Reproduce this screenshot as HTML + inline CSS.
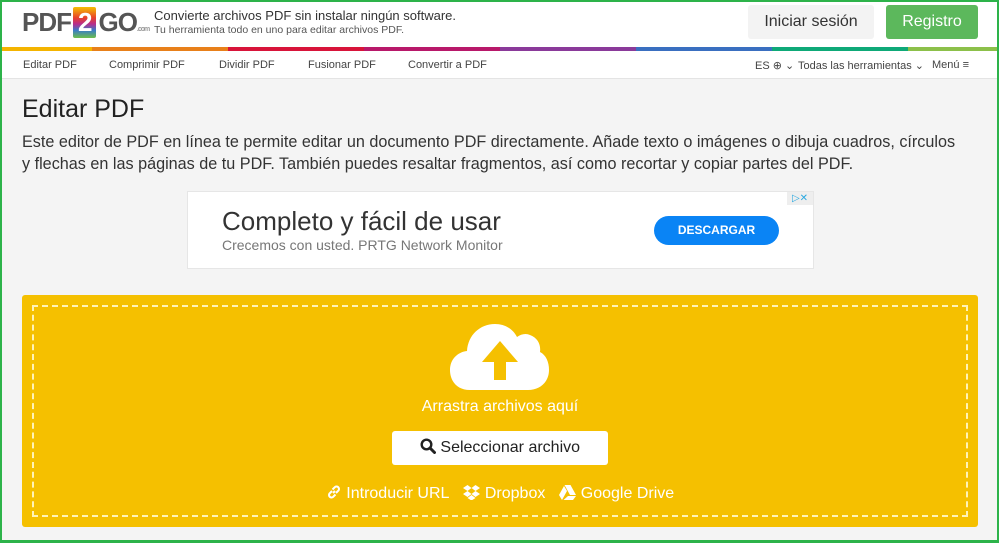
<!DOCTYPE html>
<html><head><meta charset="utf-8"><style>
*{margin:0;padding:0;box-sizing:border-box}
body{width:999px;height:543px;overflow:hidden;background:#f4f4f4;font-family:"Liberation Sans","DejaVu Sans",sans-serif;position:relative}
.frame{position:absolute;inset:0;border:2px solid #2db34a;border-bottom-width:3px;pointer-events:none;z-index:10}
.top{position:absolute;left:0;top:0;width:999px;height:47px;background:#fff}
.bar{position:absolute;top:47px;left:0;width:999px;height:4px;display:flex}
.bar div{height:4px}
.nav{position:absolute;top:51px;left:0;width:999px;height:28px;background:#fff;border-bottom:1px solid #e4e4e4;font-size:11px;color:#444}
.nav span{position:absolute;top:8px}
.logo{position:absolute;left:22px;top:7px;font-weight:bold;font-size:26px;color:#555;letter-spacing:-1px}
.tag1{position:absolute;left:154px;top:8px;font-size:13px;color:#333}
.tag2{position:absolute;left:154px;top:24px;font-size:10.5px;color:#555}
.btn1{position:absolute;left:748px;top:5px;width:126px;height:34px;background:#f3f3f3;border-radius:3px;font-size:16px;color:#333;text-align:center;line-height:34px}
.btn2{position:absolute;left:886px;top:5px;width:92px;height:34px;background:#5cb85c;border-radius:3px;font-size:16px;color:#fff;text-align:center;line-height:34px}
h1{position:absolute;left:22px;top:95px;font-size:25px;font-weight:normal;color:#222}
p.d{position:absolute;left:22px;top:131px;width:942px;font-size:16.2px;line-height:22px;color:#333}
.ad{position:absolute;left:187px;top:191px;width:627px;height:78px;background:#fff;border:1px solid #e6e6e6}
.ad .t{position:absolute;left:34px;top:14px;font-size:26px;color:#333}
.ad .s{position:absolute;left:34px;top:45px;font-size:14px;color:#777}
.ad .b{position:absolute;left:466px;top:24px;width:125px;height:29px;background:#0a84f5;border-radius:15px;color:#fff;font-size:12px;font-weight:bold;text-align:center;line-height:29px}
.up{position:absolute;left:22px;top:295px;width:956px;height:232px;background:#f5c000;border-radius:3px}
.dash{position:absolute;left:10px;top:10px;right:10px;bottom:10px;border:2px dashed #fff3b8}
.drag{position:absolute;left:0;width:100%;top:103px;text-align:center;color:#fff;font-size:16px}
.sel{position:absolute;left:370px;top:136px;width:216px;height:34px;background:#fff;border-radius:3px;text-align:center;line-height:34px;font-size:16px;color:#222}
.links{position:absolute;left:0;width:100%;top:189px;text-align:center;color:#fff;font-size:16px}
.links span{margin:0 7px}
svg.i{vertical-align:-2px}
</style></head><body>
<div class="top">
<div class="logo">PDF<span style="display:inline-block;background:linear-gradient(#f5c000,#e8412c 35%,#b72d8e 55%,#3a7bc8 75%,#6cbf4b);color:#fff;padding:0 5px;margin:0 2px;border-radius:2px">2</span>GO<span style="font-size:7px;color:#999">.com</span></div>
<div class="tag1">Convierte archivos PDF sin instalar ningún software.</div>
<div class="tag2">Tu herramienta todo en uno para editar archivos PDF.</div>
<div class="btn1">Iniciar sesión</div>
<div class="btn2">Registro</div>
</div>
<div class="bar">
<div style="width:92px;background:#f4b400"></div><div style="width:136px;background:#e8801a"></div><div style="width:136px;background:#d8143a"></div><div style="width:136px;background:#b8186a"></div><div style="width:136px;background:#8a3a9a"></div><div style="width:136px;background:#3a6fc0"></div><div style="width:136px;background:#0ea978"></div><div style="width:91px;background:#8cc04a"></div>
</div>
<div class="nav">
<span style="left:23px">Editar PDF</span><span style="left:109px">Comprimir PDF</span><span style="left:219px">Dividir PDF</span><span style="left:308px">Fusionar PDF</span><span style="left:408px">Convertir a PDF</span>
<span style="left:755px">ES ⊕ ⌄</span><span style="left:798px">Todas las herramientas ⌄</span><span style="left:932px">Menú ≡</span>
</div>
<h1>Editar PDF</h1>
<p class="d">Este editor de PDF en línea te permite editar un documento PDF directamente. Añade texto o imágenes o dibuja cuadros, círculos<br>y flechas en las páginas de tu PDF. También puedes resaltar fragmentos, así como recortar y copiar partes del PDF.</p>
<div class="ad"><div class="t">Completo y fácil de usar</div><div class="s">Crecemos con usted. PRTG Network Monitor</div><div class="b">DESCARGAR</div>
<div style="position:absolute;right:0;top:0;width:26px;height:13px;background:#eee;color:#29a8e0;font-size:10px;text-align:center;line-height:13px">▷✕</div></div>
<div class="up"><div class="dash"></div>
<svg style="position:absolute;left:428px;top:27px" width="100" height="70" viewBox="0 0 100 70"><path d="M20 68 C6 68 0 58 0 48 C0 37 8 30 17 29 C18 13 30 2 45 2 C55 2 63 7 67 15 C71 12 76 11 80 13 C88 16 91 23 90 30 C96 33 99 40 99 48 C99 60 90 68 78 68 Z" fill="#fff"/><path d="M44 58 V40 H32 L50 19 L68 40 H56 V58 Z" fill="#f5c000"/></svg>
<div class="drag">Arrastra archivos aquí</div>
<div class="sel"><svg class="i" width="16" height="16" viewBox="0 0 16 16"><circle cx="6.5" cy="6.5" r="4.8" fill="none" stroke="#222" stroke-width="2.4"/><path d="M10 10 L14.5 14.5" stroke="#222" stroke-width="3" stroke-linecap="round"/></svg> Seleccionar archivo</div>
<div class="links"><span><svg class="i" width="16" height="16" viewBox="0 0 16 16"><path d="M7 9 L9 7" stroke="#fff" stroke-width="2"/><path d="M6 7 L3.5 9.5 a2.5 2.5 0 0 0 3.5 3.5 L9.5 10.5 M10 9 L12.5 6.5 a2.5 2.5 0 0 0 -3.5 -3.5 L6.5 5.5" fill="none" stroke="#fff" stroke-width="2"/></svg> Introducir URL</span><span><svg class="i" width="17" height="15" viewBox="0 0 17 15"><path d="M4.5 0 L0 3 L4.5 6 L8.5 3Z M12.5 0 L8.5 3 L12.5 6 L17 3Z M0 9 L4.5 6 L8.5 9 L4.5 12Z M17 9 L12.5 6 L8.5 9 L12.5 12Z M4.5 13 L8.5 10 L12.5 13 L8.5 15.5Z" fill="#fff"/></svg> Dropbox</span><span><svg class="i" width="17" height="15" viewBox="0 0 17 15"><path d="M5.5 0 H11.5 L17 10 H11 Z M5 1 L8 6 L3 15 L0 10 Z M9 11 H17 L14 15 H4.5Z" fill="#fff"/></svg> Google Drive</span></div>
</div>
<div class="frame"></div>
</body></html>
